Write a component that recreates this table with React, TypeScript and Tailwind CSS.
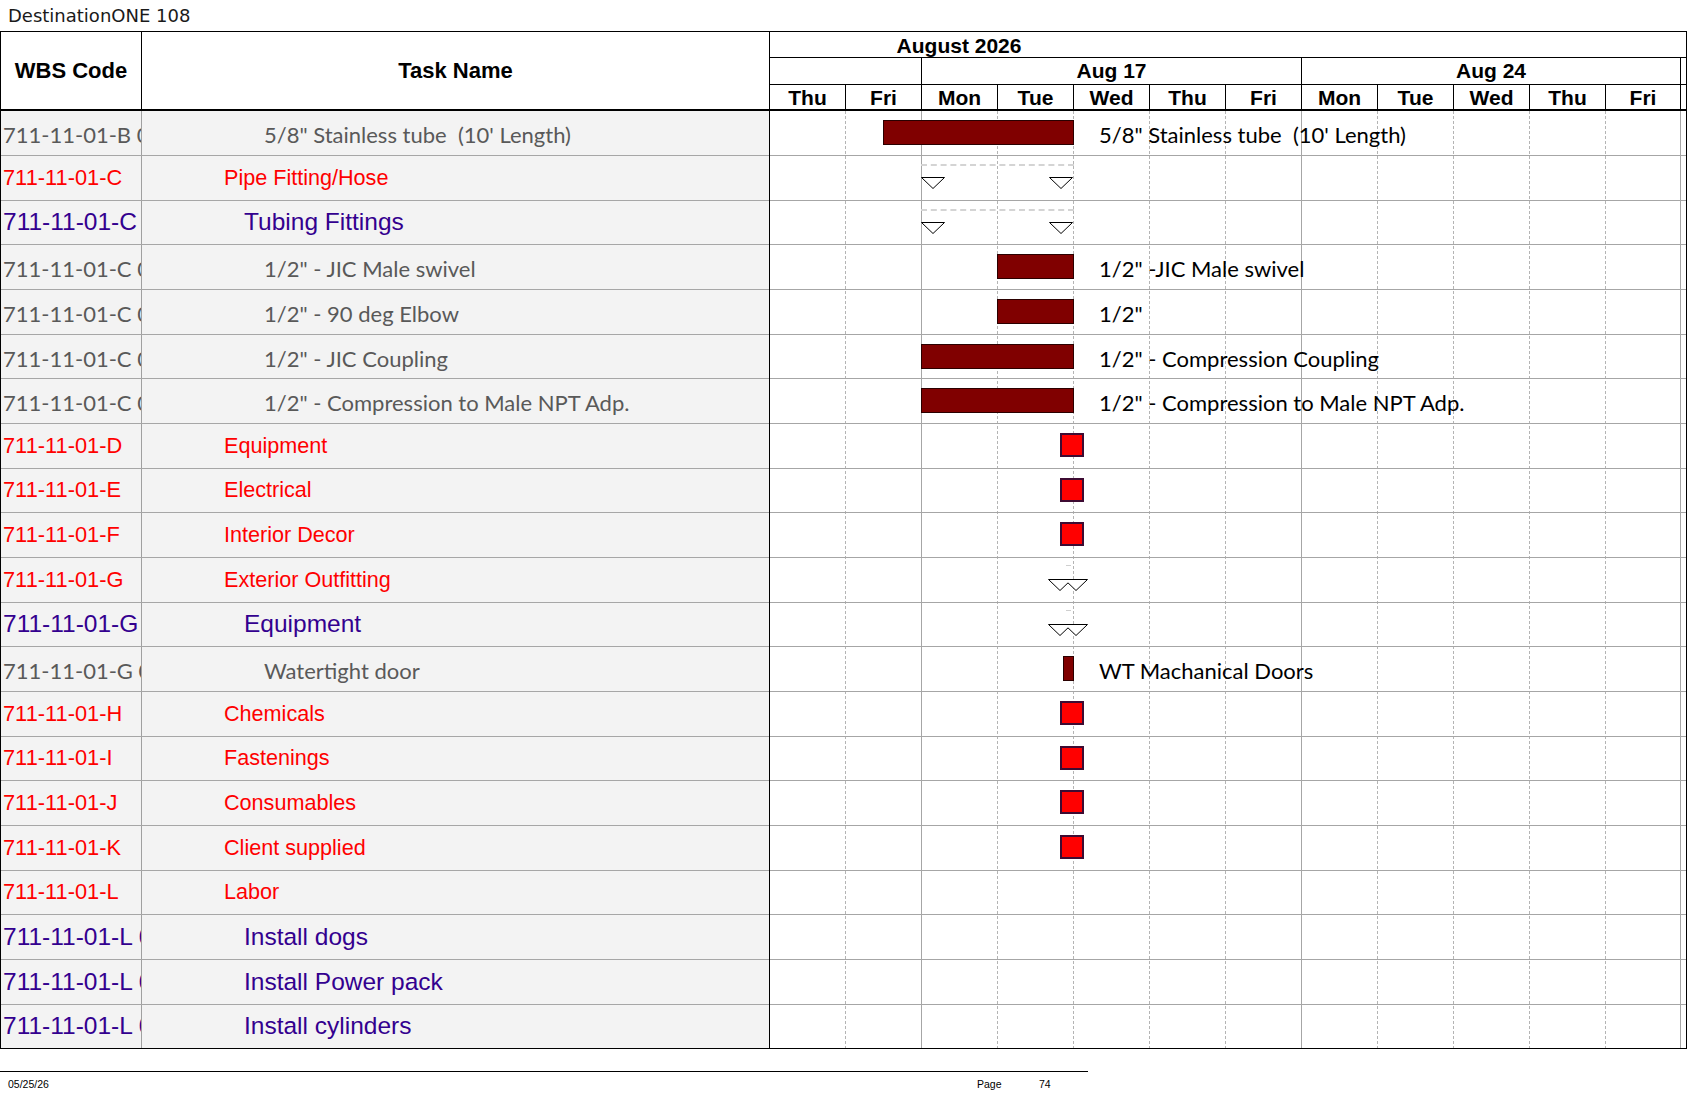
import React from 'react';

const ARIAL = "font-['Liberation_Sans',Arial,sans-serif]";
const CAL = "font-['Lato','Open_Sans',sans-serif]";
const TITLE = "font-['DejaVu_Sans',sans-serif]";

type Kind = 'gray' | 'red' | 'purple';
type Chart =
  | { t: 'bar'; left: number; width: number; label: string }
  | { t: 'summary' }
  | { t: 'ms2' }
  | { t: 'sq' }
  | { t: 'none' };

interface Row {
  kind: Kind;
  wbs: string;
  name: string;
  chart: Chart;
}

const rows: Row[] = [
  { kind: 'gray', wbs: '711-11-01-B 01', name: `5/8" Stainless tube  (10' Length)`, chart: { t: 'bar', left: 113, width: 191, label: `5/8" Stainless tube  (10' Length)` } },
  { kind: 'red', wbs: '711-11-01-C', name: 'Pipe Fitting/Hose', chart: { t: 'summary' } },
  { kind: 'purple', wbs: '711-11-01-C', name: 'Tubing Fittings', chart: { t: 'summary' } },
  { kind: 'gray', wbs: '711-11-01-C 01', name: `1/2" - JIC Male swivel`, chart: { t: 'bar', left: 227, width: 77, label: `1/2" -JIC Male swivel` } },
  { kind: 'gray', wbs: '711-11-01-C 01', name: `1/2" - 90 deg Elbow`, chart: { t: 'bar', left: 227, width: 77, label: `1/2"` } },
  { kind: 'gray', wbs: '711-11-01-C 01', name: `1/2" - JIC Coupling`, chart: { t: 'bar', left: 151, width: 153, label: `1/2" - Compression Coupling` } },
  { kind: 'gray', wbs: '711-11-01-C 01', name: `1/2" - Compression to Male NPT Adp.`, chart: { t: 'bar', left: 151, width: 153, label: `1/2" - Compression to Male NPT Adp.` } },
  { kind: 'red', wbs: '711-11-01-D', name: 'Equipment', chart: { t: 'sq' } },
  { kind: 'red', wbs: '711-11-01-E', name: 'Electrical', chart: { t: 'sq' } },
  { kind: 'red', wbs: '711-11-01-F', name: 'Interior Decor', chart: { t: 'sq' } },
  { kind: 'red', wbs: '711-11-01-G', name: 'Exterior Outfitting', chart: { t: 'ms2' } },
  { kind: 'purple', wbs: '711-11-01-G', name: 'Equipment', chart: { t: 'ms2' } },
  { kind: 'gray', wbs: '711-11-01-G 01', name: 'Watertight door', chart: { t: 'bar', left: 293, width: 11, label: 'WT Machanical Doors' } },
  { kind: 'red', wbs: '711-11-01-H', name: 'Chemicals', chart: { t: 'sq' } },
  { kind: 'red', wbs: '711-11-01-I', name: 'Fastenings', chart: { t: 'sq' } },
  { kind: 'red', wbs: '711-11-01-J', name: 'Consumables', chart: { t: 'sq' } },
  { kind: 'red', wbs: '711-11-01-K', name: 'Client supplied', chart: { t: 'sq' } },
  { kind: 'red', wbs: '711-11-01-L', name: 'Labor', chart: { t: 'none' } },
  { kind: 'purple', wbs: '711-11-01-L 01', name: 'Install dogs', chart: { t: 'none' } },
  { kind: 'purple', wbs: '711-11-01-L 01', name: 'Install Power pack', chart: { t: 'none' } },
  { kind: 'purple', wbs: '711-11-01-L 01', name: 'Install cylinders', chart: { t: 'none' } },
];

const days = ['Thu', 'Fri', 'Mon', 'Tue', 'Wed', 'Thu', 'Fri', 'Mon', 'Tue', 'Wed', 'Thu', 'Fri'];

const rowH = (i: number) => (i % 3 === 2 ? 'h-[44px]' : 'h-[45px]');
const rowBorder = (i: number) => (i === rows.length - 1 ? 'border-black' : 'border-[#a6a6a6]');

function wbsClass(k: Kind) {
  if (k === 'gray') return `${CAL} text-[22px] text-[#595959] pt-[3px]`;
  if (k === 'red') return `${ARIAL} text-[21.8px] text-[#ff0000]`;
  return `${ARIAL} text-[24.5px] text-[#33008f]`;
}

function nameClass(k: Kind) {
  if (k === 'gray') return `${CAL} text-[22px] text-[#595959] pl-[122px] pt-[3px]`;
  if (k === 'red') return `${ARIAL} text-[21.6px] text-[#ff0000] pl-[82px]`;
  return `${ARIAL} text-[24.5px] text-[#33008f] pl-[102px]`;
}

function Tri({ className }: { className: string }) {
  return (
    <svg className={className} width="24" height="12" viewBox="0 0 24 12">
      <polygon points="0.5,0.5 23.5,0.5 12,11.5" fill="white" stroke="black" strokeWidth="1" />
    </svg>
  );
}

function ChartCell({ c }: { c: Chart }) {
  if (c.t === 'bar') {
    return (
      <>
        <div
          className="absolute top-[9px] h-[25px] bg-[#800000] border border-[#2a0000]"
          style={{ left: c.left, width: c.width }}
        />
        <div className={`absolute left-[329px] top-0 bottom-0 flex items-center pt-[3px] whitespace-pre text-[22px] text-black ${CAL}`}>
          {c.label}
        </div>
      </>
    );
  }
  if (c.t === 'summary') {
    return (
      <>
        <div className="absolute left-[151px] top-[8px] w-[153px] h-0 border-t-2 border-dashed border-[#d4d4d4]" />
        <Tri className="absolute left-[151px] top-[21px]" />
        <Tri className="absolute left-[279px] top-[21px]" />
      </>
    );
  }
  if (c.t === 'ms2') {
    return (
      <>
        <div className="absolute left-[296px] top-[7px] w-[5px] h-px bg-[#cfcfcf]" />
        <svg className="absolute left-[278px] top-[21px]" width="40" height="12" viewBox="0 0 40 12">
          <path d="M0.5,0.5 H39.5 L28,11.5 L20,3.85 L12,11.5 Z" fill="white" stroke="black" strokeWidth="1" strokeLinejoin="miter" />
        </svg>
      </>
    );
  }
  if (c.t === 'sq') {
    return <div className="absolute left-[290px] top-[9px] w-[24px] h-[24px] bg-[#ff0000] border-2 border-[#3d0b32]" />;
  }
  return null;
}

function LeftSection() {
  return (
    <div className="w-[770px] shrink-0 border-l border-r border-black">
      <div className={`flex h-[80px] border-t border-b-2 border-black ${ARIAL} font-bold text-[22px] text-black`}>
        <div className="w-[141px] shrink-0 border-r border-black flex items-center justify-center">WBS Code</div>
        <div className="flex-1 flex items-center justify-center">Task Name</div>
      </div>
      {rows.map((r, i) => (
        <div key={i} className={`flex bg-[#f3f3f3] border-b ${rowBorder(i)} ${rowH(i)}`}>
          <div className="w-[141px] shrink-0 border-r border-[#a0a0a0] overflow-hidden">
            <div className={`h-full flex items-center whitespace-nowrap pl-[2px] ${wbsClass(r.kind)}`}>{r.wbs}</div>
          </div>
          <div className={`flex-1 flex items-center whitespace-pre overflow-hidden ${nameClass(r.kind)}`}>{r.name}</div>
        </div>
      ))}
    </div>
  );
}

function GridCols() {
  return (
    <div className="absolute inset-0 flex">
      {days.map((_, i) => {
        const solid = i === 1 || i === 6 || i === 11;
        const w = i === 11 ? 'w-[75px]' : 'w-[76px]';
        return (
          <div
            key={i}
            className={`${w} shrink-0 h-full border-r ${solid ? 'border-solid border-[#a6a6a6]' : 'border-dashed border-[#b4b4b4]'}`}
          />
        );
      })}
      <div className="flex-1" />
    </div>
  );
}

function ChartSection() {
  return (
    <div className="w-[917px] shrink-0 border-r border-black">
      <div className={`h-[80px] border-t border-b-2 border-black flex flex-col ${ARIAL} font-bold text-[21px] text-black`}>
        <div className="h-[26px] shrink-0 border-b border-black flex">
          <div className="w-[378px] text-center leading-[25px] pt-[1px]">August 2026</div>
        </div>
        <div className="h-[27px] shrink-0 border-b border-black flex">
          <div className="w-[152px] shrink-0 border-r border-black" />
          <div className="w-[380px] shrink-0 border-r border-black text-center leading-[26px]">Aug 17</div>
          <div className="w-[379px] shrink-0 border-r border-black text-center leading-[26px]">Aug 24</div>
          <div className="flex-1" />
        </div>
        <div className="flex-1 flex">
          {days.map((d, i) => (
            <div
              key={i}
              className={`${i === 11 ? 'w-[75px]' : 'w-[76px]'} shrink-0 border-r border-black text-center leading-[24px] pt-[1px]`}
            >
              {d}
            </div>
          ))}
          <div className="flex-1" />
        </div>
      </div>
      <div className="relative">
        <GridCols />
        {rows.map((r, i) => (
          <div key={i} className={`relative border-b ${rowBorder(i)} ${rowH(i)}`}>
            <ChartCell c={r.chart} />
          </div>
        ))}
      </div>
    </div>
  );
}

export default function App() {
  return (
    <div className="w-[1687px] h-[1097px] bg-white overflow-hidden text-black">
      <div className={`h-[31px] pt-[5px] pl-[8px] text-[18px] leading-[21px] text-[#1a1a1a] ${TITLE}`}>DestinationONE 108</div>
      <div className="flex">
        <LeftSection />
        <ChartSection />
      </div>
      <div className="h-[22px]" />
      <div className="w-[1088px] h-px bg-black" />
      <div className={`flex h-[25px] items-center ${ARIAL} text-[10.5px] text-black`}>
        <div className="w-[977px] pl-[8px]">05/25/26</div>
        <div className="w-[62px]">Page</div>
        <div>74</div>
      </div>
    </div>
  );
}
